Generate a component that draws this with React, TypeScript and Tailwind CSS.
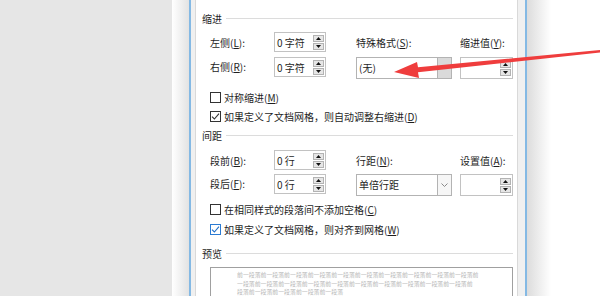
import type { ReactNode } from 'react';

const Acc = ({ text, k }: { text: string; k: string }) => (
  <span className="whitespace-nowrap">
    {text}(<span className="underline underline-offset-1">{k}</span>):
  </span>
);

const SpinBtn = ({ up }: { up?: boolean }) => (
  <div className="flex h-[7px] w-[11px] items-center justify-center border border-[#b3b3b3] bg-[#e6e6e6]">
    <svg width="5" height="3" viewBox="0 0 5 3">
      <path d={up ? 'M0 3 L2.5 0 L5 3 Z' : 'M0 0 L2.5 3 L5 0 Z'} fill="#111" />
    </svg>
  </div>
);

const SpinBox = ({ value, tall }: { value?: string; tall?: boolean }) => (
  <div
    className={`flex items-center border border-[#c2c2c2] bg-white pl-[2px] pr-[1px] ${
      tall ? 'h-[22px] w-[53px]' : 'h-[20px] w-[52px]'
    }`}
  >
    <span className="flex-1 whitespace-nowrap">{value}</span>
    <div className="flex flex-col gap-[1px]">
      <SpinBtn up />
      <SpinBtn />
    </div>
  </div>
);

const Dropdown = ({ value, pressed }: { value: string; pressed?: boolean }) => (
  <div className="flex h-[22px] w-[96px] border border-[#b3b3b3] bg-white">
    <span className="flex-1 pl-[2px] leading-[20px]">{value}</span>
    <div
      className={`flex w-[14px] items-center justify-center border-l border-[#b3b3b3] ${
        pressed ? 'bg-[#dadada]' : 'bg-[#f6f6f6]'
      }`}
    >
      {!pressed && (
        <svg width="7" height="4" viewBox="0 0 7 4">
          <path d="M0.5 0.5 L3.5 3.5 L6.5 0.5" fill="none" stroke="#8a8a8a" strokeWidth="1" />
        </svg>
      )}
    </div>
  </div>
);

const CheckRow = ({ checked, blue, children }: { checked?: boolean; blue?: boolean; children: ReactNode }) => (
  <div className="flex h-[14px] items-center gap-[3px] pl-[14px]">
    <div
      className={`flex h-[11px] w-[11px] items-center justify-center border bg-white ${
        blue ? 'border-[#2b7bd3]' : 'border-[#333333]'
      }`}
    >
      {checked && (
        <svg width="9" height="9" viewBox="0 0 9 9">
          <path d="M1 4.6 L3.4 7 L8 1.6" fill="none" stroke={blue ? '#1f6fc8' : '#333333'} strokeWidth="1.1" />
        </svg>
      )}
    </div>
    <span className="whitespace-nowrap">{children}</span>
  </div>
);

const Section = ({ title }: { title: string }) => (
  <div className="flex h-[14px] items-center gap-[4px] pl-[6px]">
    <span>{title}</span>
    <div className="h-px flex-1 bg-[#dcdcdc]" />
  </div>
);

const previewLines = [
  '前一段落前一段落前一段落前一段落前一段落前一段落前一段落前一段落前一段落前一段落前',
  '一段落前一段落前一段落前一段落前一段落前一段落前一段落前一段落前一段落前一段落前',
  '段落前一段落前一段落前一段落前一段落',
];

export default function App() {
  return (
    <div className="relative flex h-[296px] w-[600px] overflow-hidden bg-white font-['Noto_Sans_CJK_SC',sans-serif] text-[10px] text-[#1e1e1e]">
      <div className="w-[172px] bg-[#e6e6e6]" />
      <div className="w-[17px] bg-gradient-to-r from-white to-[#e3e3e3]" />
      <div className="w-[2px] bg-[#84b9e4]" />
      <div className="w-[4px] bg-[#f0f0f0]" />
      <div className="w-px bg-[#d9d9d9]" />

      <div className="flex w-[321px] flex-col bg-white pr-[4px] pt-[11px]">
        <Section title="缩进" />

        <div className="mt-[7px] flex h-[20px] items-center pl-[14px]">
          <div className="w-[64px]">
            <Acc text="左侧" k="L" />
          </div>
          <SpinBox value="0 字符" />
          <div className="w-[30px]" />
          <div className="w-[104px]">
            <Acc text="特殊格式" k="S" />
          </div>
          <Acc text="缩进值" k="Y" />
        </div>

        <div className="mt-[5px] flex items-start pl-[14px]">
          <div className="w-[64px] leading-[20px]">
            <Acc text="右侧" k="R" />
          </div>
          <SpinBox value="0 字符" />
          <div className="w-[30px]" />
          <Dropdown value="(无)" pressed />
          <div className="w-[8px]" />
          <SpinBox tall />
        </div>

        <div className="mt-[11px]">
          <CheckRow>
            对称缩进(<span className="underline underline-offset-1">M</span>)
          </CheckRow>
        </div>
        <div className="mt-[5px]">
          <CheckRow checked>
            如果定义了文档网格，则自动调整右缩进(<span className="underline underline-offset-1">D</span>)
          </CheckRow>
        </div>

        <div className="mt-[5px]">
          <Section title="间距" />
        </div>

        <div className="mt-[8px] flex h-[20px] items-center pl-[14px]">
          <div className="w-[64px]">
            <Acc text="段前" k="B" />
          </div>
          <SpinBox value="0 行" />
          <div className="w-[30px]" />
          <div className="w-[104px]">
            <Acc text="行距" k="N" />
          </div>
          <Acc text="设置值" k="A" />
        </div>

        <div className="mt-[4px] flex items-start pl-[14px]">
          <div className="w-[64px] leading-[20px]">
            <Acc text="段后" k="F" />
          </div>
          <SpinBox value="0 行" />
          <div className="w-[30px]" />
          <Dropdown value="单倍行距" />
          <div className="w-[8px]" />
          <SpinBox tall />
        </div>

        <div className="mt-[6px]">
          <CheckRow>
            在相同样式的段落间不添加空格(<span className="underline underline-offset-1">C</span>)
          </CheckRow>
        </div>
        <div className="mt-[6px]">
          <CheckRow checked blue>
            如果定义了文档网格，则对齐到网格(<span className="underline underline-offset-1">W</span>)
          </CheckRow>
        </div>

        <div className="mt-[10px]">
          <Section title="预览" />
        </div>

        <div className="ml-[14px] mt-[7px] h-[40px] w-[303px] border border-b-0 border-[#a0a0a0] pl-[26px] pt-[3px] text-[5.9px] leading-[8.6px] text-[#b8b8b8]">
          {previewLines.map((line) => (
            <div key={line} className="whitespace-nowrap">
              {line}
            </div>
          ))}
        </div>
      </div>

      <div className="w-px bg-[#d9d9d9]" />
      <div className="w-[7px] bg-[#f0f0f0]" />
      <div className="w-[2px] bg-[#84b9e4]" />
      <div className="w-[24px] bg-gradient-to-r from-[#dcdcdc] to-white" />
      <div className="flex-1 bg-white" />

      <svg className="pointer-events-none absolute left-0 top-0" width="600" height="296" viewBox="0 0 600 296">
        <polygon
          points="600,50 418,67.2 417,62 394,72 419,78 418,72.2 600,52.4"
          fill="#ef3d3d"
        />
      </svg>
    </div>
  );
}
